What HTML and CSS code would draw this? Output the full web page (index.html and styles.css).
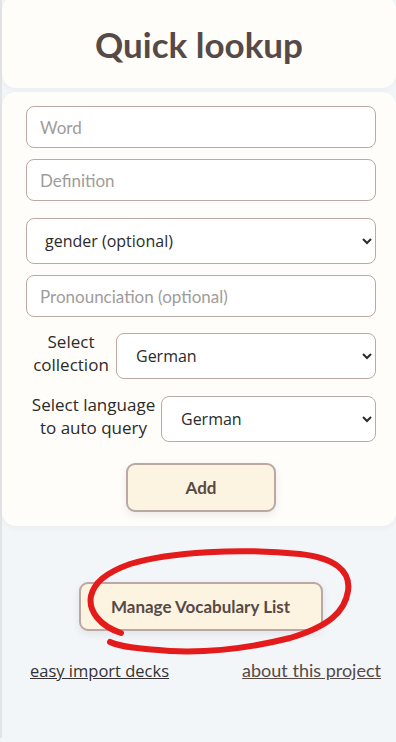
FILE: index.html
```html
<!DOCTYPE html>
<html>
<head>
    <meta charset="UTF-8">
    <title>Quick lookup</title>
    <link rel="stylesheet" href="styles.css">
</head>
<body>
    <div class="page">
        <div class="card title-card">
            <h1>Quick lookup</h1>
        </div>

        <form class="card form-card">
            <input type="text" class="field" placeholder="Word">
            <input type="text" class="field" placeholder="Definition">
            <select class="field pick gender">
                <option>gender (optional)</option>
            </select>
            <input type="text" class="field" placeholder="Pronounciation (optional)">

            <div class="row">
                <label class="lbl lbl-col">Select collection</label>
                <select class="field pick">
                    <option>German</option>
                </select>
            </div>
            <div class="row">
                <label class="lbl lbl-lang">Select language to auto query</label>
                <select class="field pick">
                    <option>German</option>
                </select>
            </div>

            <div class="center">
                <button type="button" class="btn add">Add</button>
            </div>
        </form>

        <div class="manage-wrap">
            <button type="button" class="btn manage">Manage Vocabulary List</button>
        </div>

        <div class="links">
            <a href="#" class="imp">easy import decks</a>
            <a href="#" class="about">about this project</a>
        </div>

        <!-- red marker annotation over the manage button -->
        <svg class="scribble" width="396" height="742" viewBox="0 0 396 742">
            <path d="M121 637 C 100 630, 88 615, 91 600 C 94 587, 105 577, 130 568 C 170 556, 240 552, 300 558 C 335 562, 351 575, 348 595 C 345 615, 330 630, 290 642 C 250 652, 210 657, 170 655 C 140 653, 120 651, 110 646"
                  fill="none" stroke="#e31b1b" stroke-width="6" stroke-linecap="round"/>
        </svg>
    </div>
</body>
</html>
```

FILE: styles.css
```css
* {
    box-sizing: border-box;
}
body {
    margin: 0;
    background: #f3f6f9;
    font-family: 'Lato', sans-serif;
    color: #574a46;
}
.page {
    position: relative;
    width: 396px;
    min-height: 742px;
    border-left: 2px solid #e2e4e6;
}
.card {
    background: #fefdf9;
    border-radius: 14px;
    box-shadow: 0 2px 6px rgba(0, 0, 0, 0.04);
}
.title-card {
    margin-top: -4px;
    height: 92px;
    display: flex;
    align-items: center;
    justify-content: center;
    padding-top: 4px;
}
h1 {
    margin: 0;
    font-size: 35px;
    font-weight: 700;
    color: #574a46;
}
.form-card {
    margin-top: 4px;
    padding: 14px 20px 14px 24px;
    display: flex;
    flex-direction: column;
}
.field {
    display: block;
    flex-shrink: 0;
    width: 350px;
    height: 42px;
    border: 1px solid #bca9a4;
    border-radius: 8px;
    background: #fff;
    font-family: 'Lato', sans-serif;
    font-size: 17px;
    padding: 0 13px;
    color: #333;
    margin-bottom: 11px;
}
.field::placeholder {
    color: #a09c9b;
}
.pick {
    font-family: 'Open Sans', sans-serif;
    font-size: 16px;
    padding-left: 14px;
    color: #2b2b2b;
    height: 46px;
}
.gender {
    margin-top: 6px;
}
.row {
    display: flex;
    align-items: center;
    width: 350px;
    height: 46px;
    margin-top: 5px;
    margin-bottom: 12px;
}
.row .field {
    margin: 0;
    flex: 1;
    width: auto;
    padding-left: 15px;
}
.lbl {
    font-family: 'Open Sans', sans-serif;
    font-size: 17px;
    line-height: 23px;
    color: #2b2b2b;
    text-align: center;
    margin-bottom: 7px;
}
.lbl-col {
    width: 90px;
}
.lbl-lang {
    width: 135px;
}
.center {
    display: flex;
    justify-content: center;
    margin-top: 9px;
}
.btn {
    background: #fdf3e1;
    border: 2px solid #b9a8a3;
    border-radius: 9px;
    font-family: 'Lato', sans-serif;
    font-weight: 700;
    font-size: 17px;
    color: #574a46;
    box-shadow: 0 3px 8px rgba(0, 0, 0, 0.08);
}
.add {
    width: 150px;
    height: 49px;
}
.manage-wrap {
    display: flex;
    justify-content: center;
    padding-top: 56px;
}
.manage {
    width: 244px;
    height: 49px;
    margin-left: 3px;
}
.scribble {
    position: absolute;
    left: -2px;
    top: 0;
    pointer-events: none;
}
.links {
    display: flex;
    justify-content: space-between;
    align-items: baseline;
    padding: 28px 15px 0 28px;
}
.links a {
    text-decoration: underline;
}
.imp {
    font-family: 'Open Sans', sans-serif;
    font-size: 16.5px;
    color: #333;
}
.about {
    font-family: 'Lato', sans-serif;
    font-size: 18px;
    color: #574a46;
}
```
